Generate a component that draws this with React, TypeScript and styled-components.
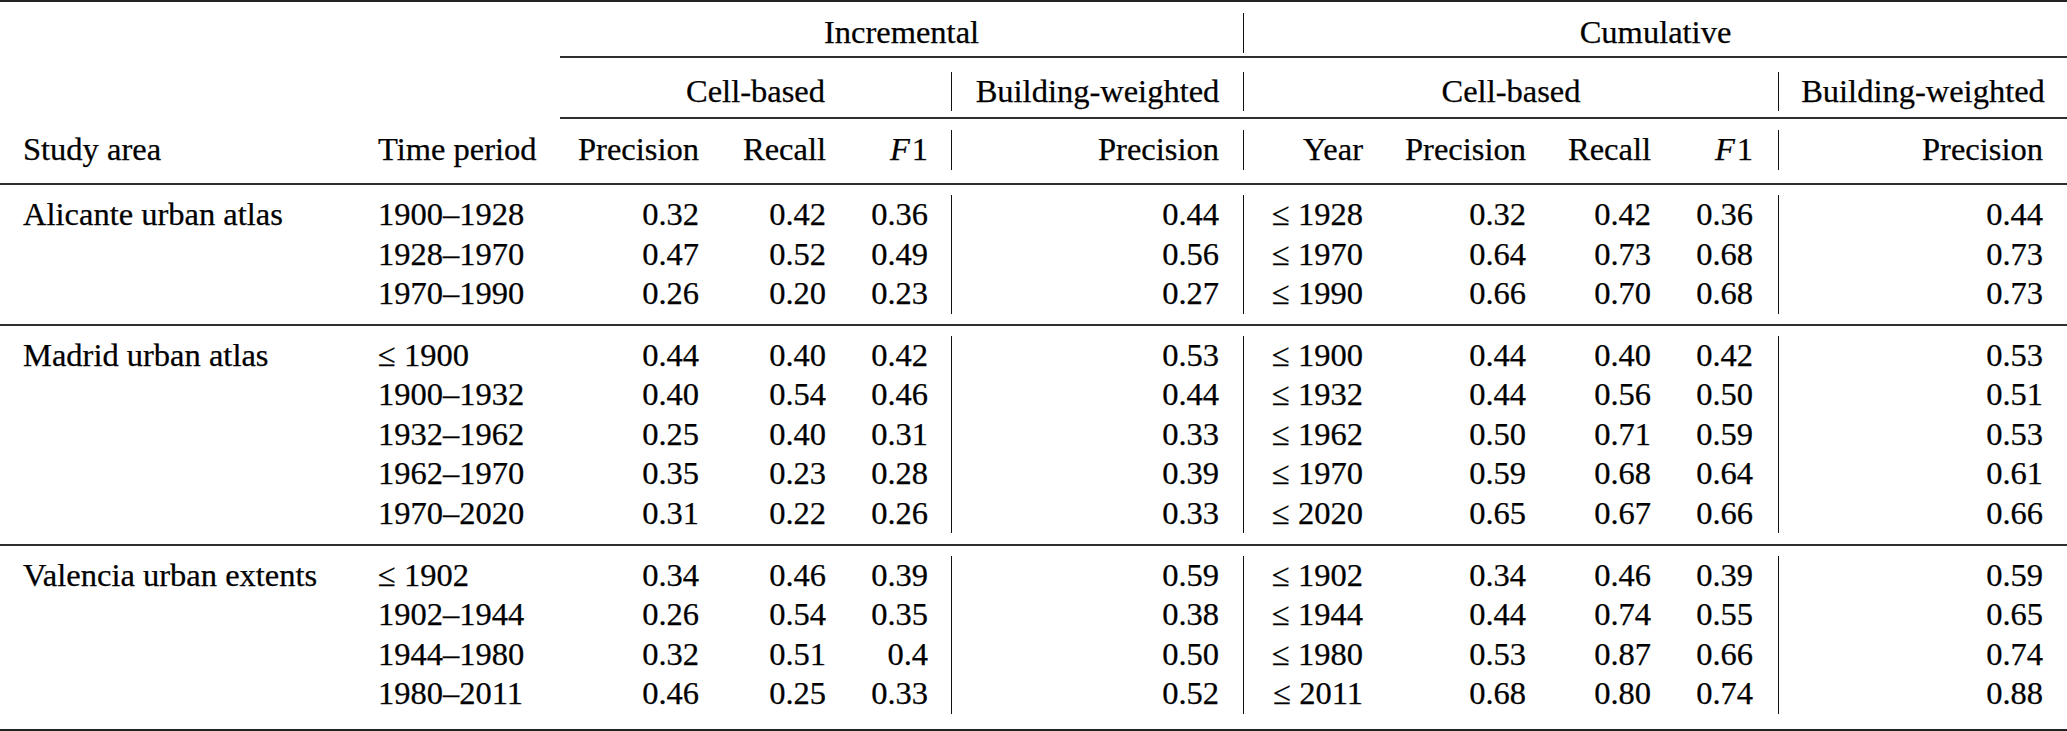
import React from "react";
import styled, { createGlobalStyle } from "styled-components";

const SERIF =
  '"Liberation Serif", Tinos, "Times New Roman", Times, "DejaVu Serif", serif';

const GlobalStyle = createGlobalStyle`
  html, body {
    margin: 0;
    padding: 0;
    background: #ffffff;
  }
  body {
    font-family: ${SERIF};
    color: #000000;
  }
`;

const COLUMNS =
  "366px 194px 151px 127px 113px 292px 132px 163px 125px 115px 289px";

type Align = "left" | "right" | "center";

interface ColSpec {
  align: Align;
  pl: number;
  pr: number;
  rule?: boolean;
}

const cols: ColSpec[] = [
  { align: "left", pl: 23, pr: 0 },
  { align: "left", pl: 12, pr: 0 },
  { align: "right", pl: 0, pr: 12 },
  { align: "right", pl: 0, pr: 12 },
  { align: "right", pl: 0, pr: 23 },
  { align: "right", pl: 0, pr: 24, rule: true },
  { align: "right", pl: 0, pr: 12, rule: true },
  { align: "right", pl: 0, pr: 12 },
  { align: "right", pl: 0, pr: 12 },
  { align: "right", pl: 0, pr: 25 },
  { align: "right", pl: 0, pr: 24, rule: true },
];

const Table = styled.div`
  width: 2067px;
  font-family: ${SERIF};
  color: #000000;
  border-top: 2px solid #222222;
  border-bottom: 2px solid #222222;
`;

const Band = styled.div<{ $top: number; $bottom: number }>`
  display: grid;
  grid-template-columns: ${COLUMNS};
  padding-top: ${(p) => p.$top}px;
  padding-bottom: ${(p) => p.$bottom}px;
`;

const Rule = styled.div<{ $indent?: number }>`
  height: 2px;
  margin-left: ${(p) => p.$indent || 0}px;
  background: #2e2e2e;
`;

const Cell = styled.div<{
  $align?: Align;
  $pl?: number;
  $pr?: number;
  $rule?: boolean;
  $span?: string;
}>`
  grid-column: ${(p) => p.$span || "auto"};
  font-size: 32.5px;
  line-height: 39.5px;
  white-space: nowrap;
  -webkit-text-stroke: 0.25px #000000;
  text-align: ${(p) => p.$align || "left"};
  padding-left: ${(p) => p.$pl || 0}px;
  padding-right: ${(p) => p.$pr || 0}px;
  border-left: ${(p) => (p.$rule ? "1px solid #111111" : "none")};
`;

const Italic = styled.span`
  font-style: italic;
  margin-right: 2px;
`;

const F1 = () => (
  <>
    <Italic>F</Italic>1
  </>
);

const labels: React.ReactNode[] = [
  "Study area",
  "Time period",
  "Precision",
  "Recall",
  <F1 key="f1a" />,
  "Precision",
  "Year",
  "Precision",
  "Recall",
  <F1 key="f1b" />,
  "Precision",
];

interface Group {
  area: string;
  rows: string[][];
}

const groups: Group[] = [
  {
    area: "Alicante urban atlas",
    rows: [
      ["1900–1928", "0.32", "0.42", "0.36", "0.44", "≤ 1928", "0.32", "0.42", "0.36", "0.44"],
      ["1928–1970", "0.47", "0.52", "0.49", "0.56", "≤ 1970", "0.64", "0.73", "0.68", "0.73"],
      ["1970–1990", "0.26", "0.20", "0.23", "0.27", "≤ 1990", "0.66", "0.70", "0.68", "0.73"],
    ],
  },
  {
    area: "Madrid urban atlas",
    rows: [
      ["≤ 1900", "0.44", "0.40", "0.42", "0.53", "≤ 1900", "0.44", "0.40", "0.42", "0.53"],
      ["1900–1932", "0.40", "0.54", "0.46", "0.44", "≤ 1932", "0.44", "0.56", "0.50", "0.51"],
      ["1932–1962", "0.25", "0.40", "0.31", "0.33", "≤ 1962", "0.50", "0.71", "0.59", "0.53"],
      ["1962–1970", "0.35", "0.23", "0.28", "0.39", "≤ 1970", "0.59", "0.68", "0.64", "0.61"],
      ["1970–2020", "0.31", "0.22", "0.26", "0.33", "≤ 2020", "0.65", "0.67", "0.66", "0.66"],
    ],
  },
  {
    area: "Valencia urban extents",
    rows: [
      ["≤ 1902", "0.34", "0.46", "0.39", "0.59", "≤ 1902", "0.34", "0.46", "0.39", "0.59"],
      ["1902–1944", "0.26", "0.54", "0.35", "0.38", "≤ 1944", "0.44", "0.74", "0.55", "0.65"],
      ["1944–1980", "0.32", "0.51", "0.4", "0.50", "≤ 1980", "0.53", "0.87", "0.66", "0.74"],
      ["1980–2011", "0.46", "0.25", "0.33", "0.52", "≤ 2011", "0.68", "0.80", "0.74", "0.88"],
    ],
  },
];

const groupPadding = [
  { top: 10, bottom: 10 },
  { top: 10, bottom: 10.5 },
  { top: 10, bottom: 15.5 },
];

function Row({ values }: { values: React.ReactNode[] }) {
  return (
    <>
      {values.map((v, i) => (
        <Cell
          key={i}
          $align={cols[i].align}
          $pl={cols[i].pl}
          $pr={cols[i].pr}
          $rule={cols[i].rule}
        >
          {v}
        </Cell>
      ))}
    </>
  );
}

export default function App() {
  return (
    <>
      <GlobalStyle />
      <Table>
        <Band $top={11} $bottom={3}>
          <Cell $span="1 / 3" />
          <Cell $span="3 / 7" $align="center">
            Incremental
          </Cell>
          <Cell $span="7 / 12" $align="center" $rule>
            Cumulative
          </Cell>
        </Band>
        <Rule $indent={560} />
        <Band $top={14} $bottom={6}>
          <Cell $span="1 / 3" />
          <Cell $span="3 / 6" $align="center">
            Cell-based
          </Cell>
          <Cell $span="6 / 7" $align="center" $rule>
            Building-weighted
          </Cell>
          <Cell $span="7 / 11" $align="center" $rule>
            Cell-based
          </Cell>
          <Cell $span="11 / 12" $align="center" $rule>
            Building-weighted
          </Cell>
        </Band>
        <Rule $indent={560} />
        <Band $top={11} $bottom={13.5}>
          <Row values={labels} />
        </Band>
        {groups.map((g, gi) => (
          <React.Fragment key={g.area}>
            <Rule />
            <Band $top={groupPadding[gi].top} $bottom={groupPadding[gi].bottom}>
              {g.rows.map((r, ri) => (
                <Row key={ri} values={[ri === 0 ? g.area : "", ...r]} />
              ))}
            </Band>
          </React.Fragment>
        ))}
      </Table>
    </>
  );
}
